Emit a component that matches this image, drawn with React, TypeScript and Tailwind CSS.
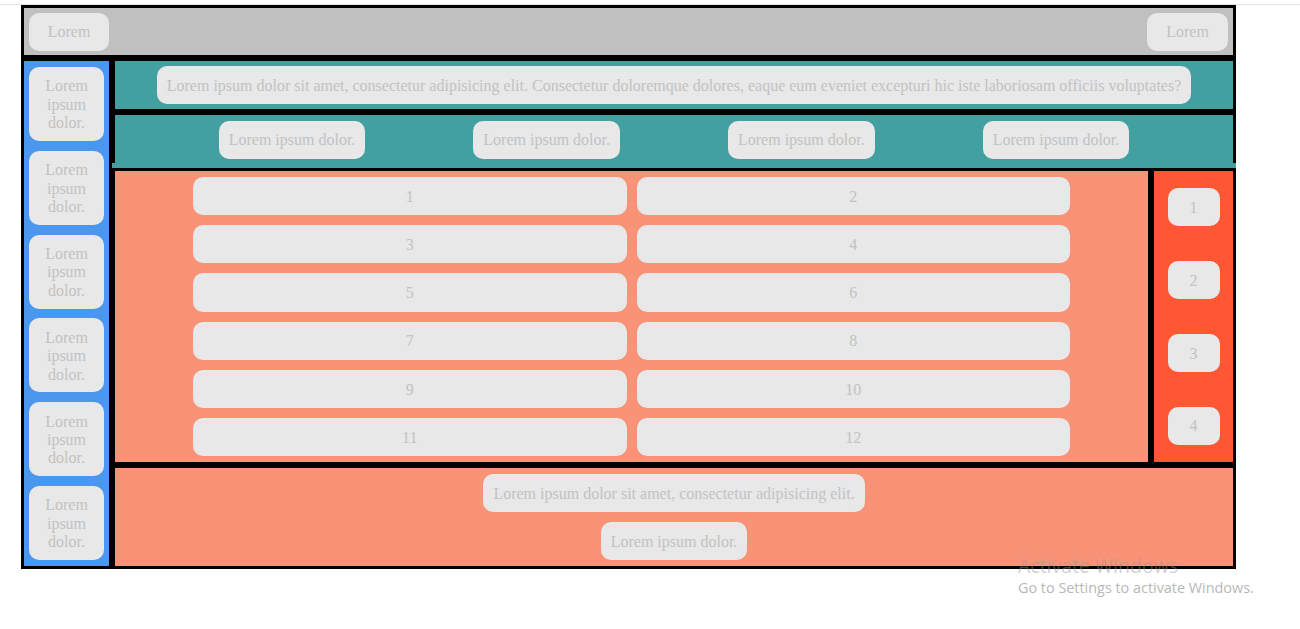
import React from 'react';

const btn =
  'bg-[#e8e8e8] text-[#c2c2c2] rounded-[10px] flex items-center justify-center text-center h-[38px] pt-[2px]';

export default function App() {
  const cells = Array.from({ length: 12 }, (_, i) => i + 1);

  return (
    <div className="relative min-h-screen bg-white font-['Liberation_Serif',serif] text-[16px] leading-[1.15]">
      <div className="h-[4px]" />
      <div className="h-px bg-[#e2e2e2]" />

      <div className="ml-[21px] w-[1215px] flex flex-col">
        {/* header */}
        <header className="h-[53px] border-[3px] border-black bg-[#c0c0c0] flex items-center justify-between px-[5px]">
          <button className={`${btn} w-[80px]`}>Lorem</button>
          <button className={`${btn} w-[81px]`}>Lorem</button>
        </header>

        <div className="flex">
          {/* sidebar */}
          <aside className="w-[91px] h-[511px] border-[3px] border-black bg-[#4b97ee] flex flex-col items-center justify-between py-[6px]">
            {Array.from({ length: 6 }, (_, i) => (
              <div key={i} className="w-[75px] h-[74px] bg-[#e8e8e8] text-[#c2c2c2] rounded-[10px] flex items-center justify-center text-center px-[10px] pt-[2px]">
                Lorem ipsum dolor.
              </div>
            ))}
          </aside>

          <main className="flex-1 flex flex-col">
            <section className="h-[54px] border-[3px] border-black bg-[#42a0a0] flex items-center justify-center">
              <div className={`${btn} px-[10px]`}>
                Lorem ipsum dolor sit amet, consectetur adipisicing elit. Consectetur doloremque dolores, eaque eum eveniet excepturi hic iste laboriosam officiis voluptates?
              </div>
            </section>

            <nav className="flex flex-col">
              <div className="h-[51px] border-[3px] border-b-0 border-black bg-[#42a0a0] flex items-center justify-center gap-[108px] pt-[1px]">
                {Array.from({ length: 4 }, (_, i) => (
                  <div key={i} className={`${btn} px-[10px]`}>Lorem ipsum dolor.</div>
                ))}
              </div>
              <div className="h-[5px] bg-[#42a0a0]" />
            </nav>

            <div className="h-[297px] flex">
              <section className="flex-1 border-[3px] border-black bg-[#f99377] py-[6px]">
                <div className="w-[877px] h-full mx-auto grid grid-cols-2 grid-rows-6 gap-x-[10px] gap-y-[10px]">
                  {cells.map((n) => (
                    <div key={n} className="bg-[#e8e8e8] text-[#c2c2c2] rounded-[10px] flex items-center justify-center pt-[2px]">
                      {n}
                    </div>
                  ))}
                </div>
              </section>
              <aside className="w-[85px] border-[3px] border-black bg-[#ff5733] flex flex-col items-center justify-around">
                {[1, 2, 3, 4].map((n) => (
                  <div key={n} className={`${btn} w-[52px]`}>{n}</div>
                ))}
              </aside>
            </div>

            <footer className="h-[104px] border-[3px] border-black bg-[#f99377] flex flex-col items-center justify-center gap-[10px]">
              <div className={`${btn} px-[10px]`}>Lorem ipsum dolor sit amet, consectetur adipisicing elit.</div>
              <div className={`${btn} px-[10px]`}>Lorem ipsum dolor.</div>
            </footer>
          </main>
        </div>
      </div>

      {/* windows activation watermark */}
      <div className="absolute left-[1018px] top-[553px] font-['Open_Sans',sans-serif] pointer-events-none">
        <div className="text-[19.5px] leading-[25px] text-[rgba(150,150,150,0.45)]">Activate Windows</div>
        <div className="text-[14.4px] leading-[19px] text-[#b8b8b8]">Go to Settings to activate Windows.</div>
      </div>
    </div>
  );
}
